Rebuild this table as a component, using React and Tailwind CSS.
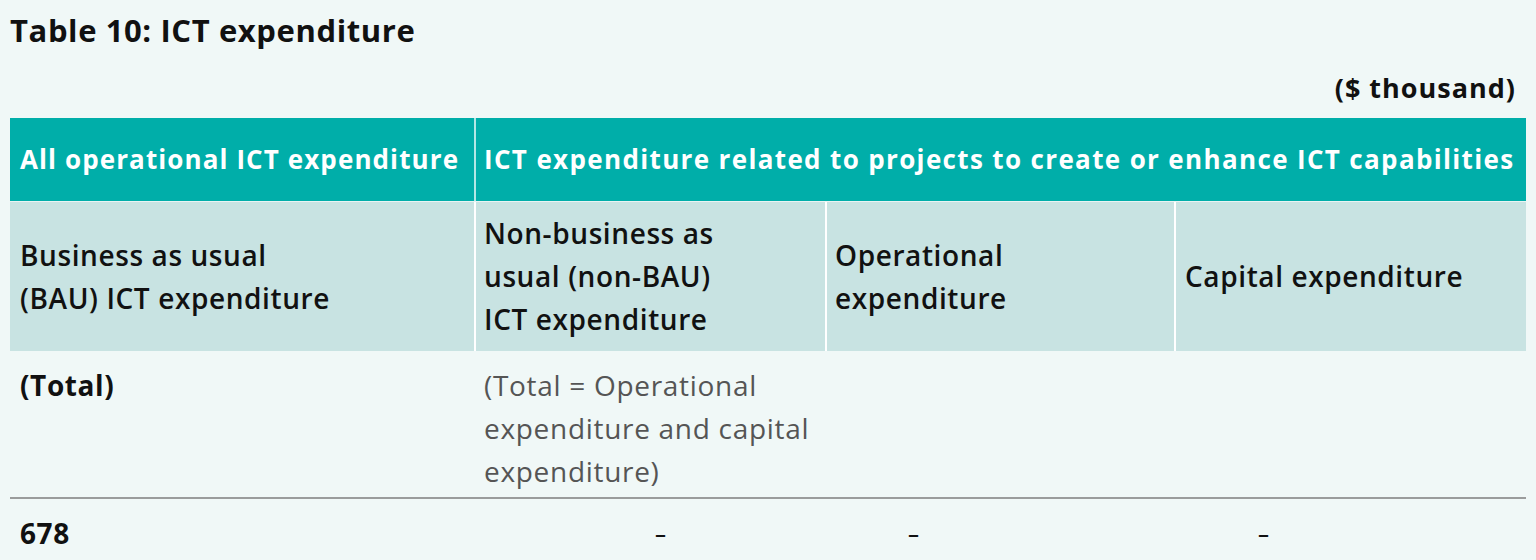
import React from "react";

const font = { fontFamily: '"Open Sans", "Liberation Sans", sans-serif' };

const App = () => {
  return (
    <div
      className="bg-[#f0f8f7] w-[1536px] h-[560px] overflow-hidden px-[10px] text-[#111]"
      style={font}
    >
      <h1 className="pt-[10px] h-[66px] text-[31px] font-bold leading-[40px] tracking-[0.6px]">
        Table 10: ICT expenditure
      </h1>
      <div className="h-[52px] flex justify-end pr-[10px]">
        <span className="text-[27px] font-bold leading-[44px] tracking-[1px]">($ thousand)</span>
      </div>

      {/* top header */}
      <div className="grid grid-cols-[466px_1050px] h-[83px] bg-[#00aea9] text-white text-[26px] font-bold">
        <div className="border-r-2 border-white/70 flex items-center pl-[10px] whitespace-nowrap tracking-[1.1px]">
          All operational ICT expenditure
        </div>
        <div className="flex items-center pl-[8px] whitespace-nowrap tracking-[1.35px]">
          ICT expenditure related to projects to create or enhance ICT capabilities
        </div>
      </div>

      {/* sub header */}
      <div className="grid grid-cols-[466px_351px_349px_350px] h-[150px] bg-[#c8e3e2] text-[28px] font-semibold leading-[43px] tracking-[0.6px] border-t border-white/60">
        <div className="border-r-2 border-white flex items-center pl-[10px]">
          <div>
            Business as usual
            <br />
            (BAU) ICT expenditure
          </div>
        </div>
        <div className="border-r-2 border-white flex items-center pl-[8px]">
          <div>
            Non-business as
            <br />
            usual (non-BAU)
            <br />
            ICT expenditure
          </div>
        </div>
        <div className="border-r-2 border-white flex items-center pl-[8px]">
          <div>
            Operational
            <br />
            expenditure
          </div>
        </div>
        <div className="flex items-center pl-[9px]">Capital expenditure</div>
      </div>

      {/* description row */}
      <div className="grid grid-cols-[466px_351px_349px_350px] h-[148px] border-b-2 border-[#9a9c9c] text-[28px] leading-[43px]">
        <div className="pl-[10px] pt-[13px] font-bold tracking-[0.6px]">(Total)</div>
        <div className="pl-[8px] pt-[13px] text-[#555] tracking-[0.7px] whitespace-nowrap">
          (Total = Operational
          <br />
          expenditure and capital
          <br />
          expenditure)
        </div>
        <div />
        <div />
      </div>

      {/* values */}
      <div className="grid grid-cols-[466px_351px_349px_350px] leading-[43px] pt-[13px]">
        <div className="pl-[10px] font-bold text-[28px] tracking-[0.6px]">678</div>
        <div className="pl-[179px] text-[22px] font-semibold">–</div>
        <div className="pl-[81px] text-[22px] font-semibold">–</div>
        <div className="pl-[82px] text-[22px] font-semibold">–</div>
      </div>
    </div>
  );
};

export default App;
